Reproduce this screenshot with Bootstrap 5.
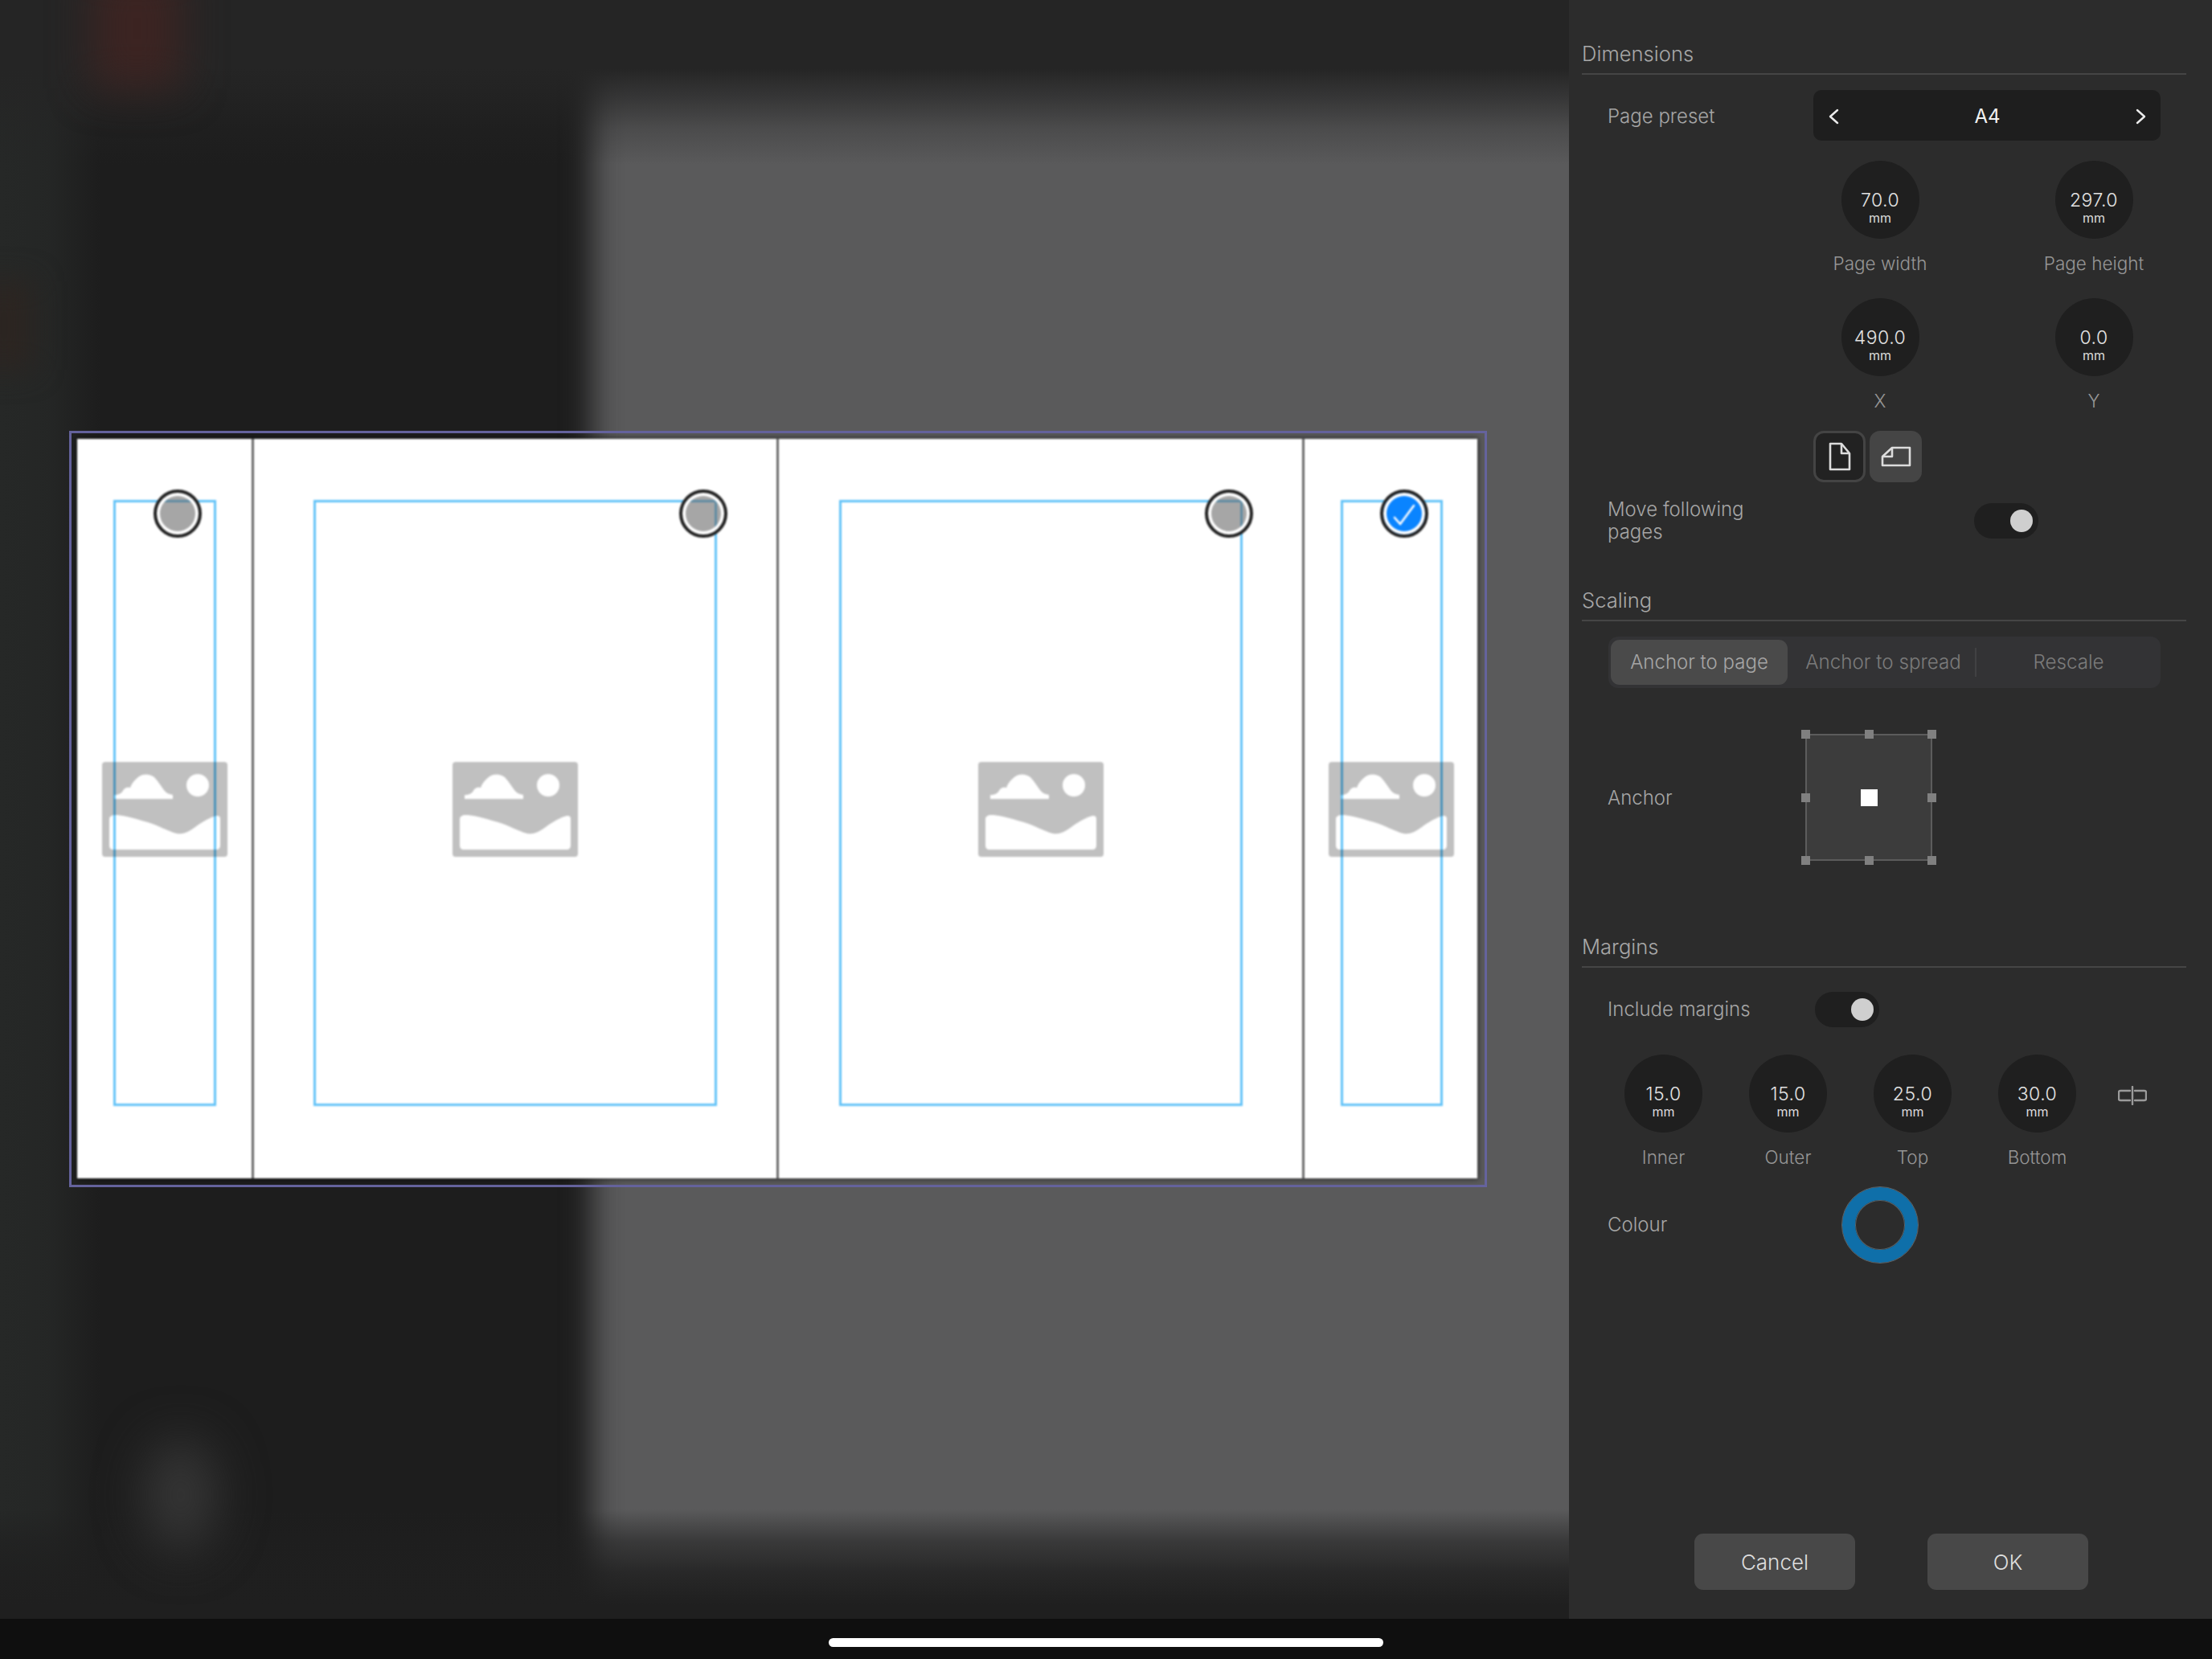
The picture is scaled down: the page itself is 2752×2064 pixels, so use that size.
<!DOCTYPE html>
<html lang="en">
<head>
<meta charset="utf-8">
<title>Spread setup</title>
<link rel="stylesheet" href="https://cdn.jsdelivr.net/npm/bootstrap@5.3.0/dist/css/bootstrap.min.css">
<style>
html,body{height:100%;margin:0;background:#0f0f0f;font-family:"Inter","Liberation Sans",sans-serif;overflow:hidden}
.app-shell{width:2752px;height:2064px}
.work-area{height:2014px}
.canvas-zone{width:1952px;height:2014px;background:#1d1d1d;overflow:hidden;padding:536px 0 0 86px}
.blur-layer{position:absolute}
.blur-grey{left:737px;top:60px;width:1300px;height:1960px;background:#5a5a5b;filter:blur(18px)}
.blur-top{left:0;top:0;width:1952px;height:210px;background:linear-gradient(to bottom,#252525 0,#252525 85px,rgba(37,37,37,.68) 121px,rgba(37,37,37,.28) 160px,rgba(37,37,37,0) 205px)}
.blur-bottom{left:0;bottom:0;width:1952px;height:140px;background:linear-gradient(to top,#1f1f1f 0,#1f1f1f 17px,rgba(31,31,31,.85) 57px,rgba(31,31,31,.55) 97px,rgba(31,31,31,0) 136px)}
.blur-left{left:0;top:0;width:130px;height:2014px;background:linear-gradient(to right,rgba(38,40,39,1) 0,rgba(38,40,39,.85) 60px,rgba(38,40,39,0) 125px)}
.blur-red{left:115px;top:-40px;width:110px;height:150px;background:#3c2422;filter:blur(26px)}
.blur-amber{left:-30px;top:350px;width:70px;height:110px;background:#2c2521;filter:blur(18px)}
.blur-blob{left:180px;top:1790px;width:90px;height:140px;background:#363636;filter:blur(30px);border-radius:50%}
.doc-frame{width:1764px;height:941px;border:3px solid #65639d;padding:7px;position:relative}
.spread-pages{width:1742px;height:920px;background:#fff;box-shadow:0 0 6px 1px rgba(0,0,0,.55);filter:blur(.8px)}
.page-cell{position:relative;height:920px;display:flex;padding-top:76px;padding-bottom:90px}
.page-cell+.page-cell{border-left:3px solid #6a6a6a}
.pc-a{width:217px;padding-left:45px;padding-right:44px}
.pc-b{width:653px;padding-left:74px;padding-right:74px}
.pc-c{width:654px;padding-left:75px;padding-right:74px}
.pc-d{width:218px;padding-left:45px;padding-right:43px}
.margin-box{flex:1 1 auto;border:3px solid #63c3f8}
.ph-icon{position:absolute;top:402px;left:50%;width:156px;height:118px;transform:translateX(-50%);mix-blend-mode:multiply}
.pick-dot{position:absolute;top:63px;width:60px;height:60px;border-radius:50%;border:4px solid #222;box-shadow:inset 0 0 0 4px #fff;background:rgba(96,96,96,.56);display:flex;align-items:center;justify-content:center}
.pd-a{left:95px}.pd-b{left:529px}.pd-c{left:530px}.pd-d{left:94px}
.pick-on{background:#0a84ff}
.side-panel{width:800px;height:2014px;background:#2c2c2c;color:#a3a3a3;font-weight:300}
.sect-head{margin-left:16px;width:752px;border-bottom:2px solid #454545;font-size:25.6px;line-height:30px;color:#a8a8a8;padding-bottom:9px}
.sh-first{margin-top:52px}
.sh-scale{margin-top:56px}
.sh-margin{margin-top:87px}
.field-row{padding-left:48px;font-size:24px;line-height:28px;color:#a6a6a6;display:flex;align-items:center}
.row-preset{margin-top:19px;height:63px}
.lbl-wide{width:256px;padding-top:3px}
.preset-box{width:432px;height:63px;background:#1e1e1e;border-radius:10px;color:#f2f2f2;font-size:24px;font-weight:400;padding:3px 17px 0 18px}
.dial-pair{margin-left:254px;width:532px;display:flex}
.dial-one{width:266px;display:flex;flex-direction:column;align-items:center}
.dial-four{margin:34px 0 0 40px;display:flex}
.dial-cell{width:155px;display:flex;flex-direction:column;align-items:center}
.dial-face{width:97px;height:97px;background:#1f1f1f;border-radius:50%;color:#e2e2e2;display:flex;flex-direction:column;align-items:center;justify-content:center;padding-top:16px}
.dial-val{font-size:23px;line-height:26px;margin-top:2px;letter-spacing:.5px}
.dial-unit{font-size:16px;line-height:18px;font-weight:400;color:#dcdcdc}
.dial-cap{font-size:22.5px;line-height:30px;color:#969696;margin-top:16px;font-weight:300}
.dp-1{margin-top:25px}
.dp-2{margin-top:28px}
.orient-row{margin:22px 0 0 304px;display:flex;gap:5px}
.orient-btn{width:65px;height:64px;border-radius:13px;background:#454545;display:flex;align-items:center;justify-content:center}
.orient-on{background:#222;border:3px solid #444}
.row-move{margin-top:20px;height:56px}
.lbl-move{width:456px}
.sw-track{width:80px;height:44px;border-radius:22px;background:#1f1f1f;position:relative}
.sw-knob{position:absolute;right:7px;top:8px;width:28px;height:28px;border-radius:50%;background:#cfcfcf}
.seg-wrap{margin:19px 0 0 49px;width:687px;height:64px;border-radius:12px;background:#333335;padding:4px 3px;display:flex;align-items:center;color:#7b7b7b;font-size:24.2px}
.seg-item{text-align:center;line-height:56px;position:relative}
.seg-1{width:220px;background:#4a4a4a;border-radius:11px;color:#a6a6a6;font-size:24px}
.seg-2{width:235px;border-right:2px solid #414143;line-height:36px;padding-left:5px}
.seg-3{width:226px;padding-left:3px}
.row-anchor{margin-top:52px;height:168px}
.lbl-anchor{width:246px;padding-top:2px}
.anchor-pad{width:158px;height:158px;background:#3c3c3c;border:2px solid #5c5c5c;position:relative;display:flex;align-items:center;justify-content:center}
.anchor-mid{width:21px;height:21px;background:#fff}
.hnd{position:absolute;width:11px;height:11px;background:#808080}
.h-tl{left:-7px;top:-7px}.h-tc{left:71.5px;top:-7px}.h-tr{right:-7px;top:-7px}
.h-ml{left:-7px;top:71.5px}.h-mr{right:-7px;top:71.5px}
.h-bl{left:-7px;bottom:-7px}.h-bc{left:71.5px;bottom:-7px}.h-br{right:-7px;bottom:-7px}
.row-include{margin-top:30px;height:44px}
.lbl-incl{width:258px}
.link-mark{margin:39px 0 0 23px;width:36px;height:24px}
.row-colour{margin-top:22px;height:94px}
.lbl-col{width:292px}
.ring-swatch{width:94px;height:94px;border-radius:50%;border:16px solid #0f6fa9;outline:1px solid #5e6468;box-shadow:inset 0 0 0 1px #5e6468}
.foot-row{margin-top:auto;padding:0 0 36px 156px;display:flex;gap:90px}
.foot-btn{width:200px;height:70px;background:#484848;border:0;border-radius:11px;color:#dedede;font-size:26px;font-weight:300;display:flex;align-items:center;justify-content:center}
.foot-btn:hover{background:#484848;color:#dedede}
.home-zone{height:50px;background:#0f0f0f}
.home-pill{width:690px;height:11px;border-radius:6px;background:#fff;margin-top:24px}
</style>
</head>
<body>
<div class="app-shell d-flex flex-column">
  <div class="work-area d-flex">
    <div class="canvas-zone position-relative">
      <div class="blur-layer blur-grey"></div>
      <div class="blur-layer blur-left"></div>
      <div class="blur-layer blur-top"></div>
      <div class="blur-layer blur-bottom"></div>
      <div class="blur-layer blur-red"></div>
      <div class="blur-layer blur-amber"></div>
      <div class="blur-layer blur-blob"></div>
      <div class="doc-frame">
        <div class="spread-pages d-flex">
          <div class="page-cell pc-a">
            <div class="margin-box"></div>
            <svg class="ph-icon" viewBox="0 0 156 118"><use href="#ph"/></svg>
            <div class="pick-dot pd-a"></div>
          </div>
          <div class="page-cell pc-b">
            <div class="margin-box"></div>
            <svg class="ph-icon" viewBox="0 0 156 118"><use href="#ph"/></svg>
            <div class="pick-dot pd-b"></div>
          </div>
          <div class="page-cell pc-c">
            <div class="margin-box"></div>
            <svg class="ph-icon" viewBox="0 0 156 118"><use href="#ph"/></svg>
            <div class="pick-dot pd-c"></div>
          </div>
          <div class="page-cell pc-d">
            <div class="margin-box"></div>
            <svg class="ph-icon" viewBox="0 0 156 118"><use href="#ph"/></svg>
            <div class="pick-dot pd-d pick-on">
              <svg width="32" height="30" viewBox="0 0 32 30" fill="none" stroke="#fff" stroke-width="2.6" stroke-linecap="round" stroke-linejoin="round"><path d="M4 20l7 8L28 5"/></svg>
            </div>
          </div>
        </div>
      </div>
    </div>
    <aside class="side-panel d-flex flex-column">
      <div class="sect-head sh-first">Dimensions</div>
      <div class="field-row row-preset">
        <span class="lbl-wide">Page preset</span>
        <div class="preset-box d-flex align-items-center justify-content-between">
          <svg width="14" height="20" viewBox="0 0 14 20" fill="none" stroke="#ececec" stroke-width="2.4" stroke-linecap="round" stroke-linejoin="round"><path d="M12 2L3 10l9 8"/></svg>
          <span>A4</span>
          <svg width="14" height="20" viewBox="0 0 14 20" fill="none" stroke="#ececec" stroke-width="2.4" stroke-linecap="round" stroke-linejoin="round"><path d="M2 2l9 8-9 8"/></svg>
        </div>
      </div>
      <div class="dial-pair dp-1">
        <div class="dial-one"><div class="dial-face"><span class="dial-val">70.0</span><span class="dial-unit">mm</span></div><div class="dial-cap">Page width</div></div>
        <div class="dial-one"><div class="dial-face"><span class="dial-val">297.0</span><span class="dial-unit">mm</span></div><div class="dial-cap">Page height</div></div>
      </div>
      <div class="dial-pair dp-2">
        <div class="dial-one"><div class="dial-face"><span class="dial-val">490.0</span><span class="dial-unit">mm</span></div><div class="dial-cap">X</div></div>
        <div class="dial-one"><div class="dial-face"><span class="dial-val">0.0</span><span class="dial-unit">mm</span></div><div class="dial-cap">Y</div></div>
      </div>
      <div class="orient-row">
        <div class="orient-btn orient-on">
          <svg width="28" height="36" viewBox="0 0 28 36" fill="none" stroke="#dcdcdc" stroke-width="2.6" stroke-linejoin="round"><path d="M2 2h14l10 12v20H2z"/><path d="M16 2v12h10"/></svg>
        </div>
        <div class="orient-btn">
          <svg width="38" height="26" viewBox="0 0 38 26" fill="none" stroke="#dcdcdc" stroke-width="2.6" stroke-linejoin="round"><path d="M14 2h22v22H2V13z"/><path d="M14 2v11H2"/></svg>
        </div>
      </div>
      <div class="field-row row-move">
        <span class="lbl-move">Move following<br>pages</span>
        <div class="sw-track"><div class="sw-knob"></div></div>
      </div>

      <div class="sect-head sh-scale">Scaling</div>
      <div class="seg-wrap">
        <div class="seg-item seg-1">Anchor to page</div>
        <div class="seg-item seg-2">Anchor to spread</div>
        <div class="seg-item seg-3">Rescale</div>
      </div>
      <div class="field-row row-anchor">
        <span class="lbl-anchor">Anchor</span>
        <div class="anchor-pad">
          <div class="anchor-mid"></div>
          <i class="hnd h-tl"></i><i class="hnd h-tc"></i><i class="hnd h-tr"></i>
          <i class="hnd h-ml"></i><i class="hnd h-mr"></i>
          <i class="hnd h-bl"></i><i class="hnd h-bc"></i><i class="hnd h-br"></i>
        </div>
      </div>

      <div class="sect-head sh-margin">Margins</div>
      <div class="field-row row-include">
        <span class="lbl-incl">Include margins</span>
        <div class="sw-track"><div class="sw-knob"></div></div>
      </div>
      <div class="dial-four">
        <div class="dial-cell"><div class="dial-face"><span class="dial-val">15.0</span><span class="dial-unit">mm</span></div><div class="dial-cap">Inner</div></div>
        <div class="dial-cell"><div class="dial-face"><span class="dial-val">15.0</span><span class="dial-unit">mm</span></div><div class="dial-cap">Outer</div></div>
        <div class="dial-cell"><div class="dial-face"><span class="dial-val">25.0</span><span class="dial-unit">mm</span></div><div class="dial-cap">Top</div></div>
        <div class="dial-cell"><div class="dial-face"><span class="dial-val">30.0</span><span class="dial-unit">mm</span></div><div class="dial-cap">Bottom</div></div>
        <svg class="link-mark" viewBox="0 0 36 24" fill="none" stroke="#9a9a9a" stroke-width="2.4" stroke-linecap="round" stroke-linejoin="round"><path d="M15 6H3a2 2 0 0 0-2 2v8a2 2 0 0 0 2 2h12"/><path d="M21 6h12a2 2 0 0 1 2 2v8a2 2 0 0 1-2 2H21"/><path d="M18 1v22"/></svg>
      </div>
      <div class="field-row row-colour">
        <span class="lbl-col">Colour</span>
        <div class="ring-swatch"></div>
      </div>
      <div class="foot-row">
        <button type="button" class="btn foot-btn">Cancel</button>
        <button type="button" class="btn foot-btn">OK</button>
      </div>
    </aside>
  </div>
  <div class="home-zone d-flex justify-content-center">
    <div class="home-pill"></div>
  </div>
</div>
<svg width="0" height="0" class="position-absolute">
  <defs>
    <path id="ph" fill="#c0c0c0" fill-rule="evenodd" d="M4 0h148a4 4 0 0 1 4 4v110a4 4 0 0 1-4 4H4a4 4 0 0 1-4-4V4a4 4 0 0 1 4-4z
    M15 46v-5c5 0 9-1 12-7 3-3 6-3 8-2 2-6 6-10 11-14 6-4 14-3 19 1 5 5 8 11 12 16 3 4 7 5 11 6v5z
    M133 29a14 14 0 1 0-28 0 14 14 0 0 0 28 0z
    M9 71c0-3 3-5 7-5 10 0 20 3 41 9 14 4 24 11 36 14 12 2 19-6 30-13 8-5 16-9 20-9 3 0 4 1 4 4v33c0 3-2 5-5 5H14c-3 0-5-2-5-5z"/>
  </defs>
</svg>
<script src="https://cdn.jsdelivr.net/npm/bootstrap@5.3.0/dist/js/bootstrap.bundle.min.js"></script>
</body>
</html>
